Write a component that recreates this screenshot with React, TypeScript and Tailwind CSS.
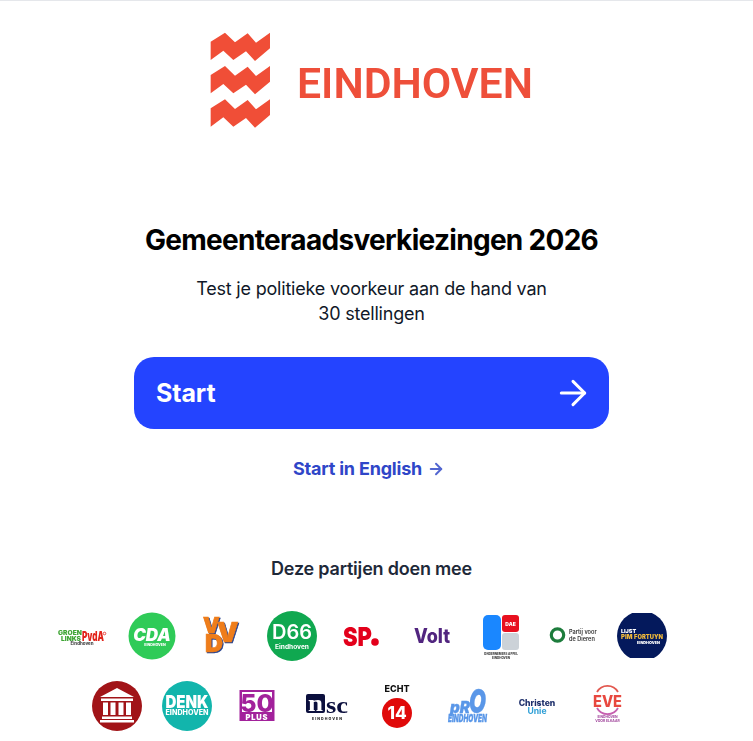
import { ArrowRight } from "lucide-react";

const box = "block w-[50px] h-[50px] mr-5 mb-5 shrink-0 blur-[0.35px] overflow-visible";
const font = "Inter, 'Liberation Sans', sans-serif";

function zig(dy: number) {
  return `M62 ${65 + dy}L105 ${38 + dy}L135 ${67 + dy}L173 ${40 + dy}L198 ${68 + dy}L240 ${38 + dy}L240 ${85 + dy}L195 ${123 + dy}L168 ${94 + dy}L130 ${120 + dy}L100 ${92 + dy}L62 ${120 + dy}Z`;
}

function Logo() {
  return (
    <svg width="360" height="120" viewBox="0 0 360 120" className="block blur-[0.3px]">
      <g transform="scale(0.3333)" fill="#f04e37">
        <path d={zig(0)} />
        <path d={zig(100)} />
        <path d={zig(200)} />
      </g>
      <text x="107" y="78" fontFamily="Roboto, sans-serif" fontWeight="600" fontSize="42" fill="#ee4f3a" textLength="236" lengthAdjust="spacingAndGlyphs">EINDHOVEN</text>
    </svg>
  );
}

const T = (p: any) => <text fontFamily={font} textAnchor="middle" {...p} />;

function Logos() {
  return (
    <>
      <svg className={box} viewBox="0 0 50 50">
        <text x="1" y="24" fontFamily={font} fontSize="6" fontWeight="900" fill="#3fa535" textLength="24" lengthAdjust="spacingAndGlyphs">GROEN</text>
        <text x="4" y="30" fontFamily={font} fontSize="6" fontWeight="900" fill="#3fa535" textLength="20" lengthAdjust="spacingAndGlyphs">LINKS</text>
        <text x="25" y="30" fontFamily={font} fontSize="13" fontWeight="900" fill="#e2231a" textLength="22" lengthAdjust="spacingAndGlyphs">PvdA</text>
        <circle cx="47.5" cy="22.5" r="1.3" fill="none" stroke="#e2231a" strokeWidth="0.8" />
        <T x="25" y="34" fontSize="4.5" fontWeight="700" fill="#333">Eindhoven</T>
      </svg>
      <svg className={box} viewBox="0 0 50 50">
        <circle cx="25" cy="25" r="23.5" fill="#2fcb58" />
        <T x="25" y="30" fontSize="17" fontWeight="900" fontStyle="italic" fill="#fff">CDA</T>
        <T x="28" y="35" fontSize="3.6" fontWeight="800" fill="#fff">EINDHOVEN</T>
      </svg>
      <svg className={box} viewBox="0 0 50 50">
        <g fontFamily={font} fontWeight="900" fill="#ef7d1a" stroke="#ef7d1a" strokeWidth="0.7" className="drop-shadow-[1.8px_1.4px_0_#24418f]">
          <text x="20" y="31" fontSize="27">V</text>
          <text x="6" y="22" fontSize="21">V</text>
          <text x="8" y="41" fontSize="25">D</text>
        </g>
      </svg>
      <svg className={box} viewBox="0 0 50 50">
        <circle cx="25" cy="25" r="25" fill="#10a850" />
        <T x="25" y="28" fontSize="20" fontWeight="600" fill="#fff">D66</T>
        <T x="25" y="38" fontSize="6.6" fontWeight="700" fill="#fff">Eindhoven</T>
      </svg>
      <svg className={box} viewBox="0 0 50 50">
        <text x="6" y="35" fontFamily={font} fontSize="26" fontWeight="900" fill="#e3001b" textLength="29" lengthAdjust="spacingAndGlyphs">SP</text>
        <circle cx="38" cy="31" r="3.8" fill="#e3001b" />
      </svg>
      <svg className={box} viewBox="0 0 50 50">
        <text x="7" y="32" fontFamily={font} fontSize="20" fontWeight="800" fill="#51257f" textLength="36" lengthAdjust="spacingAndGlyphs">Volt</text>
      </svg>
      <svg className={box} viewBox="0 0 50 50">
        <rect x="6" y="4" width="18" height="35" rx="5" fill="#1a87ff" />
        <rect x="25" y="4" width="17" height="17" rx="3" fill="#e8101f" />
        <T x="33.5" y="14.5" fontSize="5" fontWeight="900" fill="#fff">DAE</T>
        <rect x="25" y="22" width="17" height="17" rx="3" fill="#ccd2d8" />
        <T x="24" y="44" fontSize="3" fontWeight="800" fill="#444">ONDERNEMERS APPEL</T>
        <T x="24" y="47.5" fontSize="3" fontWeight="800" fill="#444">EINDHOVEN</T>
      </svg>
      <svg className={box} viewBox="0 0 50 50">
        <circle cx="10.5" cy="24" r="6.2" fill="none" stroke="#1d7c3c" strokeWidth="3.2" />
        <g fontFamily={font} fontSize="5.6" fontWeight="600" fill="#333">
          <text x="22" y="23">Partij voor</text>
          <text x="22" y="30">de Dieren</text>
        </g>
      </svg>
      <svg className={box} viewBox="0 0 50 50">
        <defs>
          <clipPath id="lpf"><rect x="0" y="2" width="50" height="45" /></clipPath>
        </defs>
        <circle cx="25" cy="25" r="25" fill="#04195c" clipPath="url(#lpf)" />
        <g fontFamily={font} fontWeight="900">
          <text x="4" y="22" fontSize="5.4" fill="#fff">LIJST</text>
          <text x="4" y="27.5" fontSize="6" fill="#f0b93a">PIM</text>
          <text x="17" y="27.5" fontSize="6" fill="#f0b93a" textLength="29" lengthAdjust="spacingAndGlyphs">FORTUYN</text>
          <text x="20" y="33" fontSize="3.8" fill="#fff">EINDHOVEN</text>
        </g>
      </svg>

      <svg className={box} viewBox="0 0 50 50">
        <circle cx="25" cy="25" r="25" fill="#a11418" />
        <path d="M25 7L42 16H8Z M9 17.5H41V20H9Z M11 21.5H16V34H11Z M18.5 21.5H23.5V34H18.5Z M26.5 21.5H31.5V34H26.5Z M34 21.5H39V34H34Z M10 35.5H40V38H10Z M8 39H42V41.5H8Z" fill="#fff" />
      </svg>
      <svg className={box} viewBox="0 0 50 50">
        <circle cx="25" cy="25" r="25" fill="#12b5ac" />
        <text x="3.5" y="27" fontFamily={font} fontSize="18" fontWeight="900" fill="#fff" textLength="43" lengthAdjust="spacingAndGlyphs">DENK</text>
        <text x="3.5" y="34" fontFamily={font} fontSize="7" fontWeight="800" fill="#fff" textLength="43" lengthAdjust="spacingAndGlyphs">EINDHOVEN</text>
      </svg>
      <svg className={box} viewBox="0 0 50 50">
        <rect x="7.5" y="9" width="35" height="31" fill="#a2219b" />
        <rect x="10" y="11" width="30" height="20" fill="#fff" />
        <T x="25" y="30.5" fontSize="25" fontWeight="800" fill="#a2219b">50</T>
        <T x="25" y="38.5" fontSize="7.5" fontWeight="900" letterSpacing="0.8" fill="#fff">PLUS</T>
      </svg>
      <svg className={box} viewBox="0 0 50 50">
        <rect x="4" y="13" width="19" height="19" rx="2" fill="#0b0f3d" />
        <text x="6" y="30" fontFamily="'Liberation Serif', serif" fontSize="24" fontWeight="700" fill="#fff" textLength="15" lengthAdjust="spacingAndGlyphs">n</text>
        <text x="24" y="32" fontFamily="'Liberation Serif', serif" fontSize="24" fontWeight="700" fill="#0b0f3d" textLength="22" lengthAdjust="spacingAndGlyphs">sc</text>
        <text x="10" y="39" fontFamily={font} fontSize="3.6" fontWeight="800" fill="#222" textLength="30">EINDHOVEN</text>
      </svg>
      <svg className={box} viewBox="0 0 50 50">
        <T x="25" y="11" fontSize="9" fontWeight="800" fill="#111">ECHT</T>
        <circle cx="25" cy="32" r="15" fill="#e00a0a" />
        <T x="25" y="38" fontSize="17" fontWeight="800" fill="#fff">14</T>
      </svg>
      <svg className={box} viewBox="0 0 50 50">
        <g fontFamily={font} fontStyle="italic" fontWeight="900" fill="#5a97e8" stroke="#5a97e8" strokeWidth="0.3">
          <text x="8" y="32" fontSize="16" textLength="20" lengthAdjust="spacingAndGlyphs">pR</text>
          <text x="27" y="32" fontSize="33" textLength="17" lengthAdjust="spacingAndGlyphs">O</text>
          <text x="6" y="41" fontSize="11" textLength="39" lengthAdjust="spacingAndGlyphs">EINDHOVEN</text>
        </g>
      </svg>
      <svg className={box} viewBox="0 0 50 50">
        <T x="25" y="24.5" fontSize="8.6" fontWeight="800" fill="#1d2f6b">Christen</T>
        <T x="25" y="32.5" fontSize="8.6" fontWeight="700" fill="#2f9fd6">Unie</T>
      </svg>
      <svg className={box} viewBox="0 0 50 50">
        <path d="M15 11A12 12 0 0 1 36 11" fill="none" stroke="#e2584f" strokeWidth="1.8" />
        <path d="M15 27A12 12 0 0 0 36 27" fill="none" stroke="#c65fb0" strokeWidth="1.8" />
        <text x="11" y="26" fontFamily={font} fontSize="15.5" fontWeight="800" fill="#e8483f" textLength="29" lengthAdjust="spacingAndGlyphs">EVE</text>
        <T x="25.5" y="37" fontSize="3.4" fontWeight="700" fill="#a0459b">EINDHOVEN</T>
        <T x="25.5" y="41" fontSize="3.4" fontWeight="700" fill="#a0459b">VOOR ELKAAR</T>
      </svg>
    </>
  );
}

export default function App() {
  return (
    <div className="h-[741px] overflow-hidden border-t border-gray-200 bg-white pr-[10px] text-center" style={{ fontFamily: "Inter, 'Liberation Sans', sans-serif" }}>
      <div className="flex flex-col items-center">
        <div className="mt-[19px] mr-[3px]"><Logo /></div>
        <h1 className="mt-[82px] text-[28px] leading-[36px] font-bold tracking-[-0.7px] text-black">Gemeenteraadsverkiezingen 2026</h1>
        <p className="mt-[18px] w-[370px] text-[18px] leading-[25px] tracking-[-0.2px] text-gray-900">Test je politieke voorkeur aan de hand van 30 stellingen</p>
        <button className="mt-[31px] flex h-[72px] w-[475px] items-center justify-between rounded-[20px] bg-[#2444ff] pl-[22px] pr-[16px] text-[25px] font-bold tracking-[-0.1px] text-white">
          <span className="pt-[2px]">Start</span>
          <ArrowRight size={40} strokeWidth={1.8} />
        </button>
        <a className="mt-[28px] mr-[5px] flex items-center gap-[5px] text-[18px] leading-[24px] font-bold tracking-[-0.2px] text-[#2f46c8]">
          Start in English
          <ArrowRight size={18} strokeWidth={2.6} className="text-[#5266d0]" />
        </a>
        <h2 className="mt-[76px] text-[18px] leading-[24px] font-semibold tracking-[-0.2px] text-gray-800">Deze partijen doen mee</h2>
        <div className="mt-[30px] flex w-[650px] flex-wrap justify-center">
          <Logos />
        </div>
      </div>
    </div>
  );
}
